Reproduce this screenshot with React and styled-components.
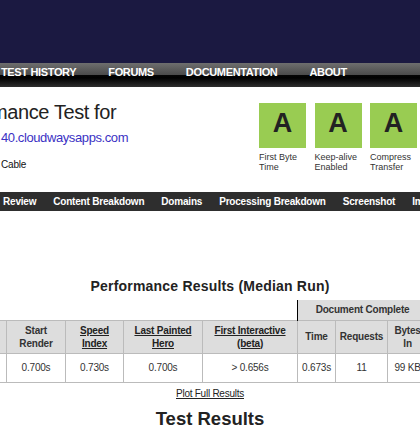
import React from 'react';
import styled, { createGlobalStyle } from 'styled-components';

const GlobalStyle = createGlobalStyle`
  html, body { margin: 0; padding: 0; overflow: hidden; background: #fff; }
  body { font-family: "Liberation Sans", Arial, sans-serif; }
  * { box-sizing: border-box; }
`;

const Page = styled.div`
  width: 420px;
  height: 438px;
  overflow: hidden;
  background: #fff;
  color: #222;
`;

const Banner = styled.header`
  height: 63px;
  background: #1b1941;
`;

const Nav = styled.nav`
  height: 24px;
  display: flex;
  gap: 32px;
  padding-left: 1px;
  white-space: nowrap;
  background: linear-gradient(
    to bottom,
    #6e6e6e 0%,
    #4a4a4a 50%,
    #050505 50%,
    #000 62%,
    #2e2e2e 100%
  );
`;

const NavLink = styled.a`
  flex: none;
  padding-top: 1px;
  color: #fff;
  font-size: 11px;
  font-weight: 700;
  line-height: 16px;
  letter-spacing: -0.35px;
  text-decoration: none;
`;

const Summary = styled.section`
  height: 105px;
  display: flex;
  align-items: flex-start;
`;

const TestInfo = styled.div`
  width: 259px;
  flex: none;
  overflow: hidden;
  padding-top: 13px;
`;

const Title = styled.h1`
  margin: 0 0 0 -61px;
  font-size: 20px;
  font-weight: 400;
  line-height: 24px;
  letter-spacing: -0.4px;
  white-space: nowrap;
  color: #222;
`;

const TestUrl = styled.a`
  display: block;
  margin-top: 6px;
  padding-left: 1px;
  font-size: 13px;
  line-height: 16px;
  letter-spacing: -0.4px;
  color: #3b31c4;
  text-decoration: none;
  white-space: nowrap;
`;

const Location = styled.div`
  margin-top: 12px;
  padding-left: 1px;
  font-size: 10px;
  line-height: 14px;
  letter-spacing: -0.2px;
  color: #111;
`;

const Grades = styled.ul`
  display: flex;
  gap: 8.5px;
  margin: 0;
  padding: 16px 0 0;
  list-style: none;
  flex: none;
`;

const Grade = styled.li`
  width: 47px;
  flex: none;
`;

const GradeBox = styled.div`
  height: 45px;
  padding-bottom: 4px;
  display: flex;
  align-items: center;
  justify-content: center;
  background: #99cc52;
  color: #222;
  font-size: 27px;
  font-weight: 700;
`;

const GradeLabel = styled.div`
  margin-top: 5px;
  font-size: 9px;
  line-height: 9.5px;
  color: #333;
`;

const TabBar = styled.nav`
  height: 19px;
  background: #2e2e2e;
  overflow: hidden;
`;

const TabList = styled.div`
  display: flex;
  gap: 17px;
  padding-left: 3px;
  white-space: nowrap;
`;

const Tab = styled.a`
  flex: none;
  padding-top: 1px;
  color: #fff;
  font-size: 10px;
  font-weight: 700;
  line-height: 18px;
  letter-spacing: -0.2px;
  text-decoration: none;
`;

const SectionTitle = styled.h2`
  margin: 66px 0 0;
  font-size: 14px;
  font-weight: 700;
  line-height: 18px;
  letter-spacing: 0.2px;
  text-align: center;
  color: #222;
`;

const TableWrap = styled.div`
  margin-top: 5px;
  overflow: hidden;
`;

const Results = styled.table`
  margin-left: -54px;
  width: 481px;
  table-layout: fixed;
  border-collapse: collapse;
  font-size: 10px;
  letter-spacing: -0.2px;
  color: #333;
`;

const GroupRow = styled.tr`
  height: 20px;
`;

const Blank = styled.th`
  border: none;
  background: #fff;
  padding: 0;
`;

const GroupHead = styled.th`
  border-left: 1px solid #000;
  border-right: 1px solid #bbb;
  background: #ddd;
  font-weight: 700;
  padding: 0 2px;
  text-align: center;
  vertical-align: middle;
  white-space: nowrap;
`;

const HeadRow = styled.tr`
  height: 33px;
`;

const Head = styled.th`
  border: 1px solid #bbb;
  background: #ddd;
  font-weight: 700;
  line-height: 13px;
  padding: 2px 2px;
  text-align: center;
  vertical-align: middle;
`;

const HeadLink = styled.a`
  color: #222;
  text-decoration: underline;
`;

const DataRow = styled.tr`
  height: 29px;
`;

const Cell = styled.td`
  border: 1px solid #bbb;
  background: #fff;
  padding: 0 2px;
  text-align: center;
  vertical-align: middle;
  white-space: nowrap;
`;

const PlotLine = styled.div`
  margin-top: 5px;
  text-align: center;
  font-size: 10px;
  line-height: 12px;
  letter-spacing: -0.25px;
`;

const PlotLink = styled.a`
  color: #222;
  text-decoration: underline;
`;

const BigTitle = styled.h2`
  margin: 8px 0 0;
  font-size: 18.5px;
  font-weight: 700;
  line-height: 22px;
  text-align: center;
  color: #222;
`;

const navItems = ['TEST HISTORY', 'FORUMS', 'DOCUMENTATION', 'ABOUT'];

const grades = [
  ['First Byte', 'Time'],
  ['Keep-alive', 'Enabled'],
  ['Compress', 'Transfer'],
  ['Compress', 'Images'],
  ['Cache', 'static content'],
];

const tabs = [
  'Review',
  'Content Breakdown',
  'Domains',
  'Processing Breakdown',
  'Screenshot',
  'Image Analysis',
];

const columns = [60, 59, 58, 79, 95, 38, 52, 40];

export default function App() {
  return (
    <Page>
      <GlobalStyle />
      <Banner />
      <Nav>
        {navItems.map((item) => (
          <NavLink key={item} href="#">
            {item}
          </NavLink>
        ))}
      </Nav>

      <Summary>
        <TestInfo>
          <Title>Performance Test for</Title>
          <TestUrl href="#">40.cloudwaysapps.com</TestUrl>
          <Location>Cable</Location>
        </TestInfo>
        <Grades>
          {grades.map(([a, b]) => (
            <Grade key={a + b}>
              <GradeBox>A</GradeBox>
              <GradeLabel>
                {a}
                <br />
                {b}
              </GradeLabel>
            </Grade>
          ))}
        </Grades>
      </Summary>

      <TabBar>
        <TabList>
          {tabs.map((t) => (
            <Tab key={t} href="#">
              {t}
            </Tab>
          ))}
        </TabList>
      </TabBar>

      <SectionTitle>Performance Results (Median Run)</SectionTitle>

      <TableWrap>
        <Results>
          <colgroup>
            {columns.map((w, i) => (
              <col key={i} style={{ width: w }} />
            ))}
          </colgroup>
          <thead>
            <GroupRow>
              <Blank colSpan={5} />
              <GroupHead colSpan={3}>Document Complete</GroupHead>
            </GroupRow>
            <HeadRow>
              <Head>
                First
                <br />
                Byte
              </Head>
              <Head>
                Start
                <br />
                Render
              </Head>
              <Head>
                <HeadLink href="#">
                  Speed
                  <br />
                  Index
                </HeadLink>
              </Head>
              <Head>
                <HeadLink href="#">
                  Last Painted
                  <br />
                  Hero
                </HeadLink>
              </Head>
              <Head>
                <HeadLink href="#">First Interactive</HeadLink>
                <br />
                <HeadLink href="#">(beta)</HeadLink>
              </Head>
              <Head>Time</Head>
              <Head>Requests</Head>
              <Head>
                Bytes
                <br />
                In
              </Head>
            </HeadRow>
          </thead>
          <tbody>
            <DataRow>
              <Cell />
              <Cell>0.700s</Cell>
              <Cell>0.730s</Cell>
              <Cell>0.700s</Cell>
              <Cell>&gt; 0.656s</Cell>
              <Cell>0.673s</Cell>
              <Cell>11</Cell>
              <Cell>99 KB</Cell>
            </DataRow>
          </tbody>
        </Results>
      </TableWrap>

      <PlotLine>
        <PlotLink href="#">Plot Full Results</PlotLink>
      </PlotLine>

      <BigTitle>Test Results</BigTitle>
    </Page>
  );
}
